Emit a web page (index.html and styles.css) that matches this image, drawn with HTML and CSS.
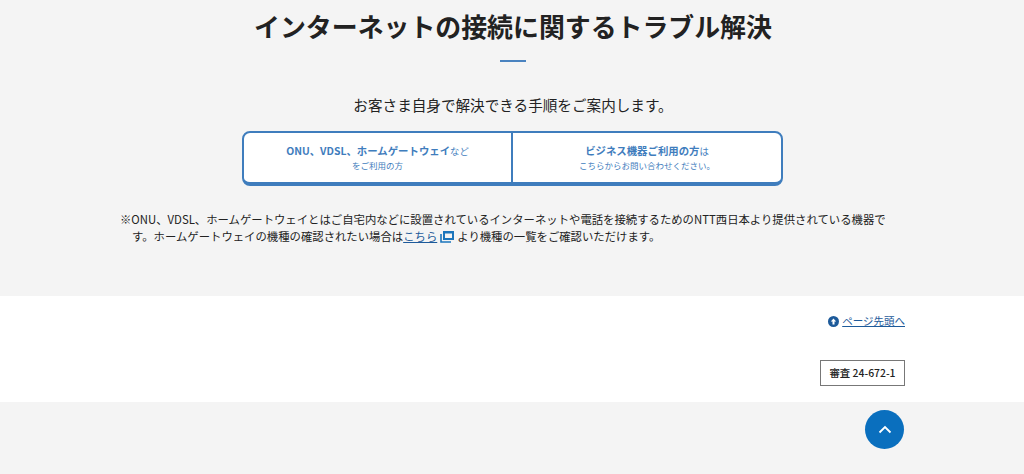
FILE: index.html
```html
<!DOCTYPE html>
<html lang="ja">
<head>
<meta charset="utf-8">
<title>インターネットの接続に関するトラブル解決</title>
<link rel="stylesheet" href="styles.css">
</head>
<body>
<section class="trouble">
  <h2 class="title">インターネットの接続に関するトラブル解決</h2>
  <div class="rule"></div>
  <p class="lead">お客さま自身で解決できる手順をご案内します。</p>
  <div class="choices">
    <a class="choice" href="#">
      <span class="line1"><b>ONU、VDSL、ホームゲートウェイ</b>など</span>
      <span class="line2">をご利用の方</span>
    </a>
    <a class="choice" href="#">
      <span class="line1"><b>ビジネス機器ご利用の方</b>は</span>
      <span class="line2">こちらからお問い合わせください。</span>
    </a>
  </div>
  <p class="note">※ONU、VDSL、ホームゲートウェイとはご自宅内などに設置されているインターネットや電話を接続するためのNTT西日本より提供されている機器です。ホームゲートウェイの機種の確認されたい場合は<a href="#">こちら</a><svg class="ext" width="14" height="12" viewBox="0 0 14 12"><path d="M1 3v8h10" fill="none" stroke="#1b75bc" stroke-width="1.600"/><path fill-rule="evenodd" d="M3 0h11v9H3zM5 2.500h7v4.500H5z" fill="#1b75bc"/></svg>より機種の一覧をご確認いただけます。</p>
</section>
<section class="foot">
  <a class="pagetop" href="#"><svg width="11" height="11" viewBox="0 0 11 11"><circle cx="5.500" cy="5.500" r="5.500" fill="#1d5a9a"/><path d="M5.500 2.400 8.200 5.400H6.500V8.400H4.500V5.400H2.800z" fill="#fff"/></svg><span>ページ先頭へ</span></a>
  <div class="code">審査 24-672-1</div>
</section>
<section class="bottom">
  <a class="totop" href="#"><svg width="14" height="9" viewBox="0 0 14 9"><path d="M1.500 7.500 7 2l5.500 5.500" fill="none" stroke="#fff" stroke-width="1.800"/></svg></a>
</section>
</body>
</html>
```
FILE: styles.css
```css
* { box-sizing: border-box; }
html, body { margin: 0; padding: 0; }
body {
  width: 1024px;
  height: 474px;
  overflow: hidden;
  background: #f4f4f4;
  color: #222;
  font-family: "Noto Sans CJK JP", "Noto Sans", sans-serif;
}
.trouble {
  height: 296px;
  padding: 7px 0 0 2px;
  display: flex;
  flex-direction: column;
  align-items: center;
}
.title {
  margin: 0;
  font-size: 25.900px;
  line-height: 38px;
  font-weight: 700;
  color: #222;
}
.rule {
  width: 26px;
  height: 2px;
  margin-top: 15px;
  background: #4a83c0;
}
.lead {
  margin: 31px 0 0;
  font-size: 14.600px;
  line-height: 24px;
  color: #222;
}
.choices {
  width: 541px;
  height: 55px;
  margin: 14px 1px 0 0;
  display: flex;
  background: #fff;
  border: 2px solid #3f7dbd;
  border-bottom-width: 4px;
  border-radius: 8px;
}
.choice {
  flex: 1 1 0;
  display: flex;
  flex-direction: column;
  align-items: center;
  justify-content: center;
  padding-top: 1px;
  color: #3f7dbd;
  text-decoration: none;
}
.choice:first-child { flex: 0 0 267px; }
.choice + .choice { border-left: 2px solid #3f7dbd; }
.line1 { font-size: 9.400px; line-height: 14px; }
.line1 b { font-size: 10.400px; font-weight: 700; }
.line2 { font-size: 8.500px; line-height: 14px; }
.note {
  width: 786px;
  margin: 25px 0 0;
  padding-left: 12px;
  text-indent: -12px;
  font-size: 11.370px;
  line-height: 17px;
  color: #222;
}
.note a { color: #1d5a9a; }
.ext { margin: 0 3px 0 3px; vertical-align: -2px; }
.foot {
  height: 106px;
  padding: 17px 119px 0 0;
  background: #fff;
  display: flex;
  flex-direction: column;
  align-items: flex-end;
}
.pagetop {
  display: flex;
  align-items: center;
  gap: 3px;
  font-size: 10.500px;
  line-height: 16px;
  color: #1d5a9a;
}
.code {
  width: 85px;
  height: 26px;
  margin-top: 31px;
  border: 1px solid #777;
  background: #fff;
  font-size: 10.400px;
  line-height: 24px;
  text-align: center;
  color: #222;
  font-weight: 500;
}
.bottom {
  display: flex;
  justify-content: flex-end;
  padding: 8px 120px 0 0;
}
.totop {
  width: 39px;
  height: 39px;
  border-radius: 50%;
  background: #0a6fbe;
  display: flex;
  align-items: center;
  justify-content: center;
}
```
